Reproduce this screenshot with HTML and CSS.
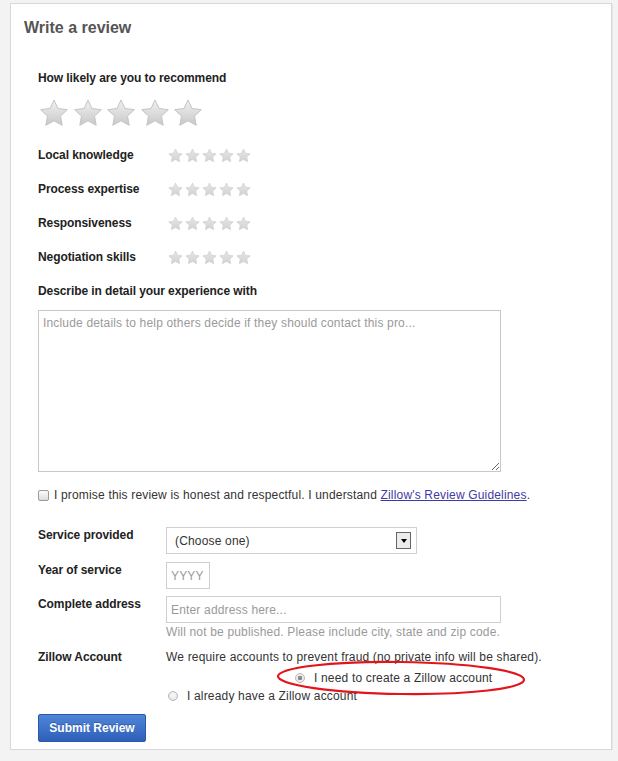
FILE: index.html
```html
<!DOCTYPE html>
<html>
<head>
<meta charset="utf-8">
<title>Write a review</title>
<link rel="stylesheet" href="styles.css">
</head>
<body>
<svg class="defs" width="0" height="0" aria-hidden="true">
  <defs>
    <linearGradient id="starGrad" x1="0" y1="0" x2="0" y2="1">
      <stop offset="0" stop-color="#f1f1f1"/>
      <stop offset="1" stop-color="#c8c8c8"/>
    </linearGradient>
    <linearGradient id="starGradSm" x1="0" y1="0" x2="0" y2="1">
      <stop offset="0" stop-color="#e6e6e6"/>
      <stop offset="1" stop-color="#d2d2d2"/>
    </linearGradient>
    <symbol id="star" viewBox="0 0 30 30">
      <polygon points="15,2 19,10.5 28.3,11.7 21.5,18.1 23.2,27.3 15,22.8 6.8,27.3 8.5,18.1 1.7,11.7 11,10.5" fill="url(#starGrad)" stroke="#c4c4c4" stroke-width="1" stroke-linejoin="round"/>
    </symbol>
    <symbol id="starSm" viewBox="0 0 30 30">
      <polygon points="15,2 19,10.5 28.3,11.7 21.5,18.1 23.2,27.3 15,22.8 6.8,27.3 8.5,18.1 1.7,11.7 11,10.5" fill="url(#starGradSm)" stroke="#d0d0d0" stroke-width="1.5" stroke-linejoin="round"/>
    </symbol>
  </defs>
</svg>

<div class="card">
  <h1 class="title">Write a review</h1>

  <div class="form">
    <div class="q-label">How likely are you to recommend</div>
    <div class="big-stars">
      <svg class="star-lg"><use href="#star"/></svg>
      <svg class="star-lg"><use href="#star"/></svg>
      <svg class="star-lg"><use href="#star"/></svg>
      <svg class="star-lg"><use href="#star"/></svg>
      <svg class="star-lg"><use href="#star"/></svg>
    </div>

    <div class="ratings">
      <div class="rating-row">
        <span class="rating-label">Local knowledge</span>
        <span class="small-stars">
          <svg class="star-sm"><use href="#starSm"/></svg><svg class="star-sm"><use href="#starSm"/></svg><svg class="star-sm"><use href="#starSm"/></svg><svg class="star-sm"><use href="#starSm"/></svg><svg class="star-sm"><use href="#starSm"/></svg>
        </span>
      </div>
      <div class="rating-row">
        <span class="rating-label">Process expertise</span>
        <span class="small-stars">
          <svg class="star-sm"><use href="#starSm"/></svg><svg class="star-sm"><use href="#starSm"/></svg><svg class="star-sm"><use href="#starSm"/></svg><svg class="star-sm"><use href="#starSm"/></svg><svg class="star-sm"><use href="#starSm"/></svg>
        </span>
      </div>
      <div class="rating-row">
        <span class="rating-label">Responsiveness</span>
        <span class="small-stars">
          <svg class="star-sm"><use href="#starSm"/></svg><svg class="star-sm"><use href="#starSm"/></svg><svg class="star-sm"><use href="#starSm"/></svg><svg class="star-sm"><use href="#starSm"/></svg><svg class="star-sm"><use href="#starSm"/></svg>
        </span>
      </div>
      <div class="rating-row">
        <span class="rating-label">Negotiation skills</span>
        <span class="small-stars">
          <svg class="star-sm"><use href="#starSm"/></svg><svg class="star-sm"><use href="#starSm"/></svg><svg class="star-sm"><use href="#starSm"/></svg><svg class="star-sm"><use href="#starSm"/></svg><svg class="star-sm"><use href="#starSm"/></svg>
        </span>
      </div>
    </div>

    <div class="describe">Describe in detail your experience with</div>
    <textarea class="details" placeholder="Include details to help others decide if they should contact this pro..."></textarea>

    <label class="agree">
      <input type="checkbox" class="check">
      <span>I promise this review is honest and respectful. I understand <a href="#" class="link">Zillow's Review Guidelines</a>.</span>
    </label>

    <div class="field field-service">
      <span class="field-label">Service provided</span>
      <div class="select">
        <span class="select-text">(Choose one)</span>
        <span class="select-btn"><span class="arrow"></span></span>
      </div>
    </div>

    <div class="field field-year">
      <span class="field-label">Year of service</span>
      <input class="input input-year" type="text" placeholder="YYYY">
    </div>

    <div class="field field-address">
      <span class="field-label">Complete address</span>
      <div class="field-body">
        <input class="input input-address" type="text" placeholder="Enter address here...">
        <div class="hint">Will not be published. Please include city, state and zip code.</div>
      </div>
    </div>

    <div class="field field-account">
      <span class="field-label">Zillow Account</span>
      <div class="field-body">
        <div class="account-note">We require accounts to prevent fraud (no private info will be shared).</div>
      </div>
    </div>
    <label class="radio-row radio-create">
      <input type="radio" name="acct" class="radio" checked>
      <span>I need to create a Zillow account</span>
    </label>
    <label class="radio-row radio-have">
      <input type="radio" name="acct" class="radio">
      <span>I already have a Zillow account</span>
    </label>

    <button class="submit" type="button">Submit Review</button>
  </div>

  <svg class="annotation" width="252" height="38" viewBox="0 0 252 38" aria-hidden="true">
    <ellipse cx="126" cy="19" rx="123" ry="16" fill="none" stroke="#e3141c" stroke-width="2.2" transform="rotate(0.8 126 19)"/>
  </svg>
</div>
</body>
</html>
```

FILE: styles.css
```css
html, body {
  margin: 0;
  padding: 0;
}

body {
  background: #f3f3f3;
  font-family: "Liberation Sans", Arial, sans-serif;
  font-size: 12px;
  letter-spacing: 0.17px;
  color: #333;
}

.defs {
  position: absolute;
  width: 0;
  height: 0;
  overflow: hidden;
}

.card {
  position: relative;
  box-sizing: border-box;
  width: 602px;
  margin: 3px 0 0 10px;
  padding: 14px 0 7px 13px;
  background: #fff;
  border: 1px solid #d8d8d8;
  box-shadow: 1px 1px 0 #e6e6e6;
}

.title {
  margin: 0;
  font-size: 16px;
  line-height: 20px;
  font-weight: bold;
  letter-spacing: 0;
  color: #555;
}

.form {
  margin: 32px 0 0 14px;
}

.q-label,
.rating-label,
.describe,
.field-label {
  font-weight: bold;
  letter-spacing: -0.08px;
  color: #222;
}

.q-label {
  line-height: 16px;
}

.big-stars {
  display: flex;
  gap: 3.5px;
  margin: 12px 0 0 1px;
  height: 30px;
}

.star-lg {
  width: 30px;
  height: 30px;
  display: block;
}

.ratings {
  margin-top: 10px;
}

.rating-row {
  display: flex;
  align-items: center;
  height: 34px;
}

.rating-label {
  width: 130px;
  line-height: 16px;
}

.small-stars {
  display: flex;
  gap: 2px;
}

.star-sm {
  width: 15px;
  height: 15px;
  display: block;
}

.describe {
  line-height: 34px;
}

.details {
  display: block;
  box-sizing: border-box;
  width: 463px;
  height: 162px;
  margin-top: 2px;
  padding: 5px 4px;
  border: 1px solid #c8c8c8;
  font-family: "Liberation Sans", Arial, sans-serif;
  font-size: 12px;
  letter-spacing: 0.17px;
  color: #333;
  resize: both;
}

.details::placeholder,
.input::placeholder {
  color: #9a9a9a;
}

.agree {
  display: flex;
  align-items: center;
  margin-top: 15px;
  line-height: 16px;
  color: #333;
}

.check {
  appearance: none;
  -webkit-appearance: none;
  box-sizing: border-box;
  width: 11px;
  height: 11px;
  margin: 0 5px 0 0;
  border: 1px solid #9a9a9a;
  border-radius: 2px;
  background: linear-gradient(#fdfdfd, #dcdcdc);
}

.link {
  color: #3f3aa4;
  text-decoration: underline;
}

.field {
  display: flex;
  align-items: flex-start;
}

.field-service {
  margin-top: 24px;
}

.field-year {
  margin-top: 8px;
}

.field-address {
  margin-top: 7px;
}

.field-account {
  margin-top: 9px;
}

.field-label {
  width: 128px;
  flex: none;
  line-height: 16px;
}

.select {
  box-sizing: border-box;
  width: 251px;
  height: 27px;
  display: flex;
  align-items: center;
  justify-content: space-between;
  padding: 0 5px 0 8px;
  border: 1px solid #cfcfcf;
  background: #fff;
  font-size: 12px;
  color: #333;
}

.select-btn {
  box-sizing: border-box;
  width: 15px;
  height: 17px;
  border: 1px solid #666;
  background: #ececec;
  display: flex;
  align-items: center;
  justify-content: center;
}

.arrow {
  width: 0;
  height: 0;
  border-left: 3.5px solid transparent;
  border-right: 3.5px solid transparent;
  border-top: 4px solid #000;
}

.input {
  box-sizing: border-box;
  height: 27px;
  padding: 0 4px;
  border: 1px solid #cfcfcf;
  font-family: "Liberation Sans", Arial, sans-serif;
  font-size: 12px;
  letter-spacing: 0.17px;
  color: #333;
  margin: 0;
  display: block;
}

.input-year {
  width: 44px;
}

.input-address {
  width: 335px;
}

.hint {
  color: #9a9a9a;
  line-height: 16px;
  margin-top: 1px;
}

.account-note {
  line-height: 16px;
  color: #333;
}

.radio-row {
  display: flex;
  align-items: center;
  height: 18px;
  color: #333;
}

.radio-create {
  margin: 4px 0 0 257px;
}

.radio-have {
  margin-left: 130px;
}

.radio {
  appearance: none;
  -webkit-appearance: none;
  box-sizing: border-box;
  width: 10px;
  height: 10px;
  margin: 0 9px 0 0;
  border: 1px solid #b8b8b8;
  border-radius: 50%;
  background: radial-gradient(circle at 50% 40%, #fafafa, #dedede);
}

.radio:checked {
  background: radial-gradient(circle, #8a8a8a 0 2px, #ececec 2.5px);
}

.submit {
  display: block;
  box-sizing: border-box;
  width: 108px;
  height: 28px;
  margin-top: 9px;
  padding: 0;
  border: 1px solid #2c58a8;
  border-radius: 2px;
  background: linear-gradient(#4f86d8, #2e5fba);
  color: #fff;
  font-family: "Liberation Sans", Arial, sans-serif;
  font-size: 12px;
  font-weight: bold;
  letter-spacing: 0;
  text-shadow: 0 -1px 0 rgba(0, 0, 0, 0.25);
}

.annotation {
  position: absolute;
  left: 264px;
  top: 655px;
}
```
